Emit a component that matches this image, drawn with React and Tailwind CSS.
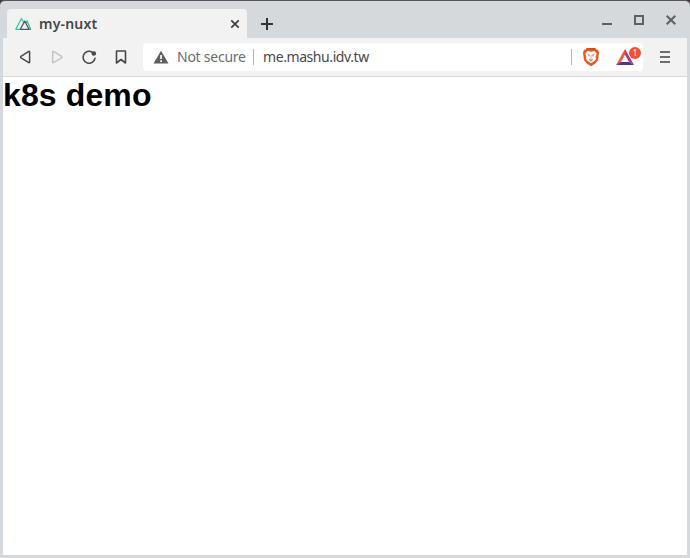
import React from "react";

function NuxtLogo() {
  return (
    <svg className="h-4 w-4 shrink-0" viewBox="0 0 16 16" fill="none" strokeWidth="1.25" strokeLinejoin="round">
      <path d="M5.5 13.3H.8L6.5 2.5l2.4 4.2" stroke="#35c99a" />
      <path d="M10.8 7.1l1.3-2.2 3.4 8.4h-2" stroke="#41b883" />
      <path d="M5.3 13.3L9.7 5.1l4.3 8.2z" stroke="#46596b" />
    </svg>
  );
}

function TabStrip() {
  return (
    <div className="flex h-[35px] items-start pl-1 pt-[6px]">
      <div className="flex h-[29px] w-[240px] items-center rounded-t-[4px] bg-[#f2f2f2] pl-2 pr-[7px]">
        <NuxtLogo />
        <span className="ml-2 text-[14px] font-semibold leading-5 tracking-[0.2px] text-[#46464a]">my-nuxt</span>
        <svg className="ml-auto h-[10px] w-[10px]" viewBox="0 0 10 10" fill="none" stroke="#3c3c3f" strokeWidth="1.7">
          <path d="M1.3 1.3l7.4 7.4M8.7 1.3L1.3 8.7" />
        </svg>
      </div>
      <svg className="ml-[14px] mt-[9px] h-3 w-3" viewBox="0 0 12 12" fill="none" stroke="#323236" strokeWidth="2">
        <path d="M6 0v12M0 6h12" />
      </svg>
      <div className="ml-auto mr-[11px] mt-[5px] flex gap-[21px]">
        <svg className="h-3 w-[11px]" viewBox="0 0 11 12"><path d="M1 9h10v2H1z" fill="#5d6165" /></svg>
        <svg className="h-3 w-[11px]" viewBox="0 0 11 12" fill="none"><path d="M2 2h8v8H2z" stroke="#5d6165" strokeWidth="2" /></svg>
        <svg className="h-3 w-[11px]" viewBox="0 0 11 12" fill="none"><path d="M1.7 1.7l8.6 8.6M10.3 1.7l-8.6 8.6" stroke="#5d6165" strokeWidth="2" /></svg>
      </div>
    </div>
  );
}

function NavIcons() {
  const cls = "h-4 w-4";
  return (
    <div className="flex gap-4 text-[#48484a]">
      <svg className={cls} viewBox="0 0 16 16" fill="none" stroke="currentColor" strokeWidth="1.5" strokeLinejoin="round">
        <path d="M12.6 3v10.2q0 .8-.8.4L4 8.8q-.8-.7 0-1.4l7.8-5q.8-.3.8.6z" />
      </svg>
      <svg className="h-4 w-4 text-[#c3c3c3]" viewBox="0 0 16 16" fill="none" stroke="currentColor" strokeWidth="1.5" strokeLinejoin="round">
        <path d="M3.7 3v10.2q0 .8.8.4l8-4.8q.8-.7 0-1.4l-8-5q-.8-.3-.8.6z" />
      </svg>
      <svg className={cls} viewBox="0 0 16 16" fill="none" stroke="currentColor" strokeWidth="1.6" strokeLinecap="round">
        <path d="M11.4 3.3A6 6 0 1 0 14 9.2" />
        <circle cx="12.8" cy="4.5" r="2.3" fill="currentColor" stroke="none" />
      </svg>
      <svg className={cls} viewBox="0 0 16 16" fill="none" stroke="currentColor" strokeWidth="1.6" strokeLinejoin="round">
        <path d="M4 2h8q.5 0 .5.5V14L8 10.5 3.5 14V2.5q0-.5.5-.5z" />
      </svg>
    </div>
  );
}

function BraveLion() {
  return (
    <svg className="ml-[11px] h-[19px] w-4 shrink-0" viewBox="0 0 16 19">
      <path d="M4 0h8l1.2 1.5 1.8.2 1 3-1 7.6-3 3.5L8 18.3l-4-2.5-3-3.5L0 4.7l1-3 1.8-.2z" fill="#e85b20" />
      <path d="M4 0h8l1.2 1.5H2.8z" fill="#c94f1a" />
      <path d="M4.4 3.1L8 3.7l3.6-.6 2 2.7-.9 3 .3 2.4-2.4 2.4L8 15.3l-2.6-1.7L3 11.2l.3-2.4-.9-3z" fill="#fff" />
      <path d="M4.1 5.8l2.9.9-.8 2zM11.9 5.8L9 6.7l.8 2zM5.6 10.5L8 11.6l2.4-1.1-1.2 2.2-1.2.8-1.2-.8z" fill="#df8861" />
      <path d="M8 7v4.3" stroke="#dfa58a" strokeWidth=".9" />
    </svg>
  );
}

function RewardsIcon() {
  return (
    <div className="relative ml-[17px] h-[18px] w-[26px] shrink-0">
      <svg className="h-[18px] w-[18px]" viewBox="0 0 18 18">
        <path d="M9 1L0 17l5-3L9 6.8z" fill="#f05a3b" />
        <path d="M9 1l9 16-5-3-4-7.2z" fill="#a43e88" />
        <path d="M0 17h18l-5-3H5z" fill="#56308c" />
      </svg>
      <span className="absolute -top-px left-[13px] flex h-[12px] w-[12px] items-center justify-center rounded-full bg-[#f4532f] text-[8px] leading-none text-white">1</span>
    </div>
  );
}

function Toolbar() {
  return (
    <div className="flex h-[39px] items-center border-b border-[#d9d9d9] bg-[#f2f2f2] pl-[14px]">
      <NavIcons />
      <div className="ml-[14px] flex h-7 w-[500px] items-center rounded-[4px] bg-white pl-[10px]">
        <svg className="h-[14px] w-4 shrink-0" viewBox="0 0 16 14">
          <path d="M8 .7L15.5 13.5H.5z" fill="#5f5f61" />
          <path d="M7.2 5h1.7v4H7.2zM7.2 10.2h1.7v1.7H7.2z" fill="#fff" />
        </svg>
        <span className="ml-2 w-[76px] whitespace-nowrap text-[14px] leading-5 tracking-[-0.25px] text-[#6b6b6d]">Not secure</span>
        <div className="h-4 w-px bg-[#b4b4b4]" />
        <span className="ml-[9px] whitespace-nowrap text-[14px] leading-5 tracking-[-0.42px] text-[#48484b]">me.mashu.idv.tw</span>
        <div className="ml-auto h-4 w-px bg-[#b4b4b4]" />
        <BraveLion />
        <RewardsIcon />
        <div className="w-px shrink-0" />
      </div>
      <svg className="ml-[17px] h-3 w-[10px]" viewBox="0 0 10 12" fill="#6c6c6e">
        <path d="M0 0h10v2H0zM0 5h10v2H0zM0 10h10v2H0z" />
      </svg>
    </div>
  );
}

export default function App() {
  return (
    <div className="h-[558px] w-[690px] overflow-hidden bg-[#403640]">
      <div className="flex h-full flex-col rounded-t-[5px] border-t border-[#56545a] bg-[#d5d9dc] px-[3px] pb-[3px] pt-[2px] font-['Noto_Sans','Open_Sans',sans-serif]">
        <TabStrip />
        <Toolbar />
        <main className="flex-1 bg-white">
          <h1 className="font-['Liberation_Sans',Arial,sans-serif] text-[32px] font-bold leading-[37px] tracking-[0.12px] text-black">k8s demo</h1>
        </main>
      </div>
    </div>
  );
}
